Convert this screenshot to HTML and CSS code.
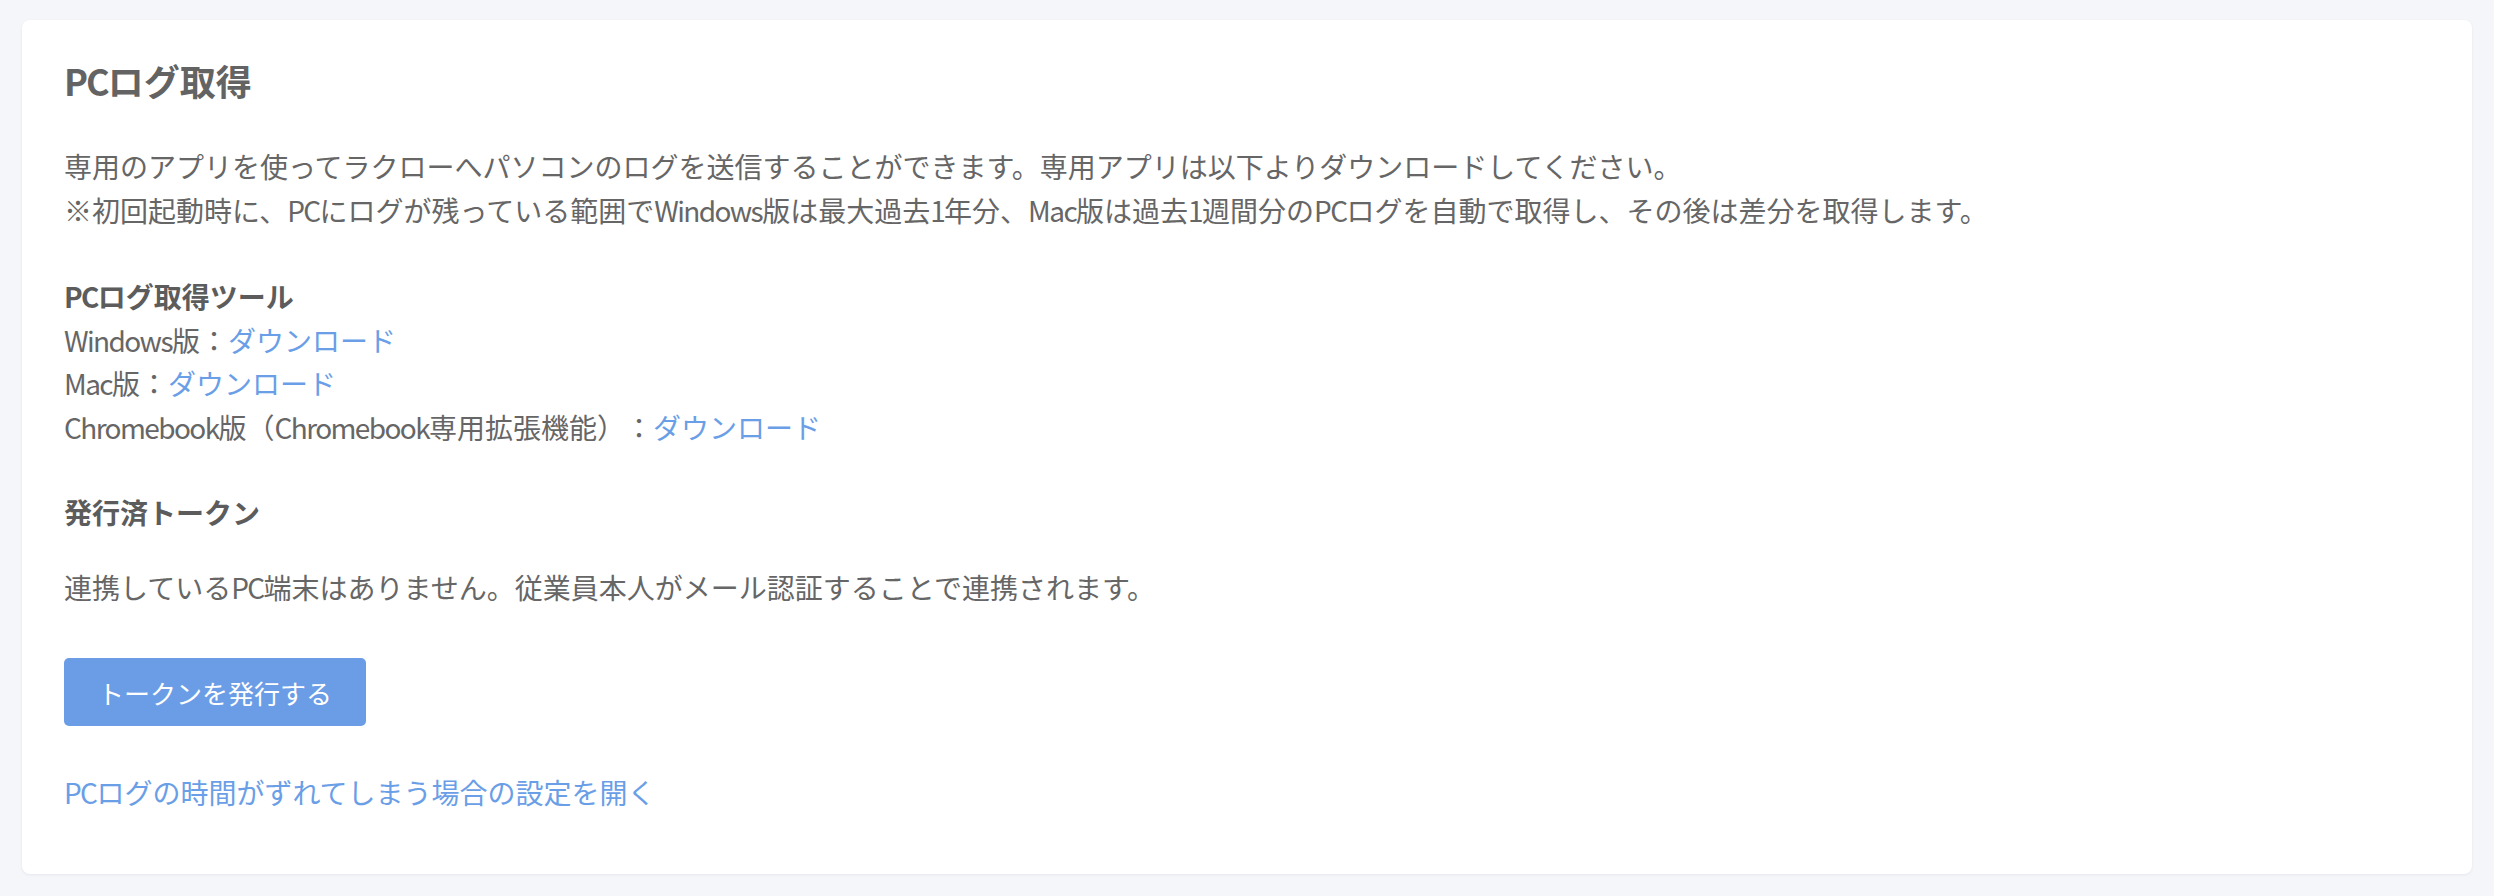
FILE: index.html
```html
<!DOCTYPE html>
<html lang="ja">
<head>
<meta charset="utf-8">
<title>PCログ取得</title>
<link rel="stylesheet" href="styles.css">
</head>
<body>
<main class="card">
  <h1 class="title"><span class="lat">PC</span>ログ取得</h1>
  <p class="text intro">専用のアプリを使ってラクローへパソコンのログを送信することができます。専用アプリは以下よりダウンロードしてください。<br>※初回起動時に、<span class="lat">PC</span>にログが残っている範囲で<span class="lat">Windows</span>版は最大過去<span class="lat">1</span>年分、<span class="lat">Mac</span>版は過去<span class="lat">1</span>週間分の<span class="lat">PC</span>ログを自動で取得し、その後は差分を取得します。</p>
  <div class="text tools">
    <div class="subhead"><span class="lat">PC</span>ログ取得ツール</div>
    <div><span class="lat">Windows</span>版：<a class="link" href="#">ダウンロード</a></div>
    <div><span class="lat">Mac</span>版：<a class="link" href="#">ダウンロード</a></div>
    <div><span class="lat">Chromebook</span>版（<span class="lat">Chromebook</span>専用拡張機能）：<a class="link" href="#">ダウンロード</a></div>
  </div>
  <div class="text subhead tokens-head">発行済トークン</div>
  <p class="text empty">連携している<span class="lat">PC</span>端末はありません。従業員本人がメール認証することで連携されます。</p>
  <div class="actions"><button class="btn" type="button">トークンを発行する</button></div>
  <div class="text footer-link"><a class="link" href="#"><span class="lat">PC</span>ログの時間がずれてしまう場合の設定を開く</a></div>
</main>
</body>
</html>
```

FILE: styles.css
```css
html, body {
  margin: 0;
  padding: 0;
}
body {
  background: #f5f6fa;
  font-family: "Noto Sans CJK JP", "Noto Sans", sans-serif;
  color: #666666;
  padding: 20px 22px 23px 22px;
  text-spacing-trim: space-all;
}
.card {
  background: #ffffff;
  border-radius: 8px;
  box-shadow: 0 1px 3px rgba(40, 50, 80, 0.08);
  padding: 33px 42px 59px 42px;
  display: flex;
  flex-direction: column;
  align-items: flex-start;
}
.title {
  margin: 0;
  font-size: 36px;
  line-height: 54px;
  font-weight: 700;
  color: #636363;
}
.title .lat {
  letter-spacing: -2px;
}
.lat {
  letter-spacing: -1.6px;
}
.text {
  font-size: 28px;
  line-height: 43.5px;
  margin: 0;
}
.intro {
  margin-top: 38px;
}
.tools {
  margin-top: 43px;
}
.subhead {
  font-weight: 700;
  color: #5c5c5c;
}
.tokens-head {
  margin-top: 42px;
}
.empty {
  margin-top: 31px;
}
.link {
  color: #6a9ee6;
  text-decoration: none;
}
.actions {
  margin-top: 49px;
}
.btn {
  display: inline-flex;
  align-items: center;
  justify-content: center;
  height: 68px;
  width: 302px;
  padding: 0;
  border: none;
  border-radius: 5px;
  background: #6b9de6;
  color: #ffffff;
  font-family: "Noto Sans CJK JP", "Noto Sans", sans-serif;
  font-size: 26px;
}
.footer-link {
  margin-top: 45px;
}
```
